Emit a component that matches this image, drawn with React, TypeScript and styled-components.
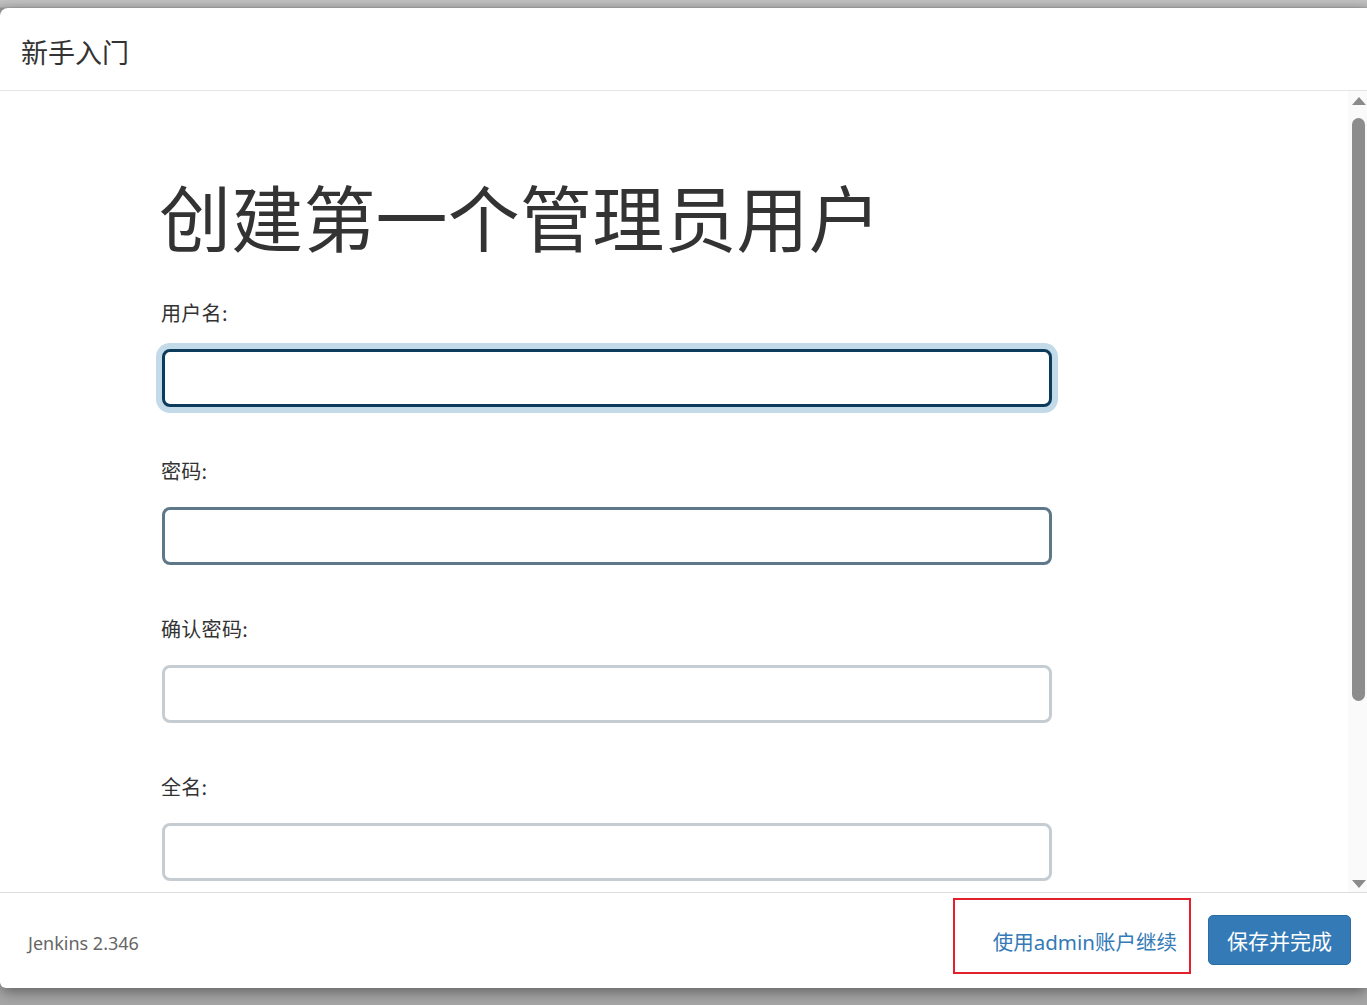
import styled, { createGlobalStyle } from 'styled-components'

const GlobalStyle = createGlobalStyle`
  html, body {
    margin: 0;
    padding: 0;
    background: #b4b4b4;
    font-family: 'Noto Sans', 'Noto Sans CJK SC', sans-serif;
  }
  * { box-sizing: border-box; }
`

const fields = [
  { label: '用户名:', state: 'focus' },
  { label: '密码:', state: 'hover' },
  { label: '确认密码:', state: 'idle' },
  { label: '全名:', state: 'idle' },
] as const

type FieldState = 'focus' | 'hover' | 'idle'

export default function App() {
  return (
    <>
      <GlobalStyle />
      <Page>
        <Modal>
          <Header>
            <Title>新手入门</Title>
          </Header>
          <BodyRow>
            <Content>
              <Heading>创建第一个管理员用户</Heading>
              {fields.map((f) => (
                <Field key={f.label}>
                  <Label>{f.label}</Label>
                  <Input $state={f.state} />
                </Field>
              ))}
            </Content>
            <ScrollBar>
              <Arrow $dir="up" />
              <Track>
                <Thumb />
              </Track>
              <Arrow $dir="down" />
            </ScrollBar>
          </BodyRow>
          <Footer>
            <Version>Jenkins 2.346</Version>
            <Actions>
              <Marked>
                <LinkText>使用admin账户继续</LinkText>
              </Marked>
              <PrimaryButton>保存并完成</PrimaryButton>
            </Actions>
          </Footer>
        </Modal>
      </Page>
    </>
  )
}

const Page = styled.div`
  height: 1005px;
  padding-top: 8px;
  overflow: hidden;
  background: linear-gradient(#c2c2c2 0, #b8b8b8 7px, #9a9a9a 8px, #b0b0b0 980px, #a5a5a5 1005px);
`

const Modal = styled.div`
  width: 1367px;
  height: 980px;
  background: #fff;
  border-top-left-radius: 8px;
  border-bottom-left-radius: 6px;
  display: flex;
  flex-direction: column;
  box-shadow: 0 4px 14px rgba(0, 0, 0, 0.45);
`

const Header = styled.div`
  height: 83px;
  flex: none;
  display: flex;
  align-items: center;
  padding: 4px 0 0 21px;
  border-bottom: 1px solid #e5e5e5;
`

const Title = styled.h4`
  margin: 0;
  font-size: 27px;
  font-weight: 400;
  color: #333;
  font-family: 'Noto Sans CJK SC', sans-serif;
`

const BodyRow = styled.div`
  flex: 1;
  display: flex;
  min-height: 0;
  overflow: hidden;
`

const Content = styled.div`
  flex: 1;
  padding: 84px 0 0 161px;
  font-family: 'Noto Sans CJK SC', sans-serif;
  color: #333;
`

const Heading = styled.h1`
  margin: 0 0 43px -2px;
  font-size: 72px;
  line-height: 80px;
  font-weight: 400;
  color: #333;
  letter-spacing: 0.2px;
`

const Field = styled.div`
  display: flex;
  flex-direction: column;
  margin-bottom: 49px;
`

const Label = styled.label`
  font-size: 20px;
  line-height: 30px;
  height: 30px;
  margin-bottom: 21px;
  color: #333;
  letter-spacing: 0.3px;
`

const borderColors: Record<FieldState, string> = {
  focus: '#0c3b5c',
  hover: '#5e7889',
  idle: '#c6cdd2',
}

const Input = styled.div<{ $state: FieldState }>`
  width: 890px;
  height: 58px;
  margin-left: 1px;
  border: 3px solid ${(p) => borderColors[p.$state]};
  border-radius: 8px;
  background: #fff;
  box-shadow: ${(p) => (p.$state === 'focus' ? '0 0 0 6px #c3dbe9' : 'none')};
`

const ScrollBar = styled.div`
  width: 19px;
  flex: none;
  background: #fafafa;
  display: flex;
  flex-direction: column;
  align-items: center;
  padding: 6px 0 4px;
`

const Arrow = styled.div<{ $dir: 'up' | 'down' }>`
  width: 0;
  height: 0;
  border-left: 7px solid transparent;
  border-right: 7px solid transparent;
  ${(p) =>
    p.$dir === 'up'
      ? 'border-bottom: 8px solid #8a8a8a; margin-bottom: 13px; margin-left: 2px;'
      : 'border-top: 8px solid #8a8a8a; margin-top: auto; margin-left: 2px;'}
`

const Track = styled.div`
  width: 100%;
  display: flex;
  justify-content: center;
  padding-left: 2px;
`

const Thumb = styled.div`
  width: 13px;
  height: 583px;
  border-radius: 7px;
  background: #8c8c8c;
`

const Footer = styled.div`
  height: 96px;
  flex: none;
  border-top: 1px solid #dedede;
  display: flex;
  align-items: center;
  justify-content: space-between;
  padding: 0 16px 0 28px;
`

const Version = styled.span`
  font-family: 'Noto Sans', sans-serif;
  font-size: 18px;
  line-height: 26px;
  color: #666;
  margin-top: 4px;
`

const Actions = styled.div`
  align-self: flex-start;
  display: flex;
  align-items: flex-start;
  gap: 17px;
  padding-top: 5px;
`

const Marked = styled.div`
  width: 238px;
  height: 76px;
  border: 2px solid #e3212b;
  display: flex;
  align-items: center;
  justify-content: flex-end;
  padding: 11px 12px 0 0;
`

const LinkText = styled.a`
  font-family: 'Noto Sans', 'Noto Sans CJK SC', sans-serif;
  font-size: 20.5px;
  line-height: 28px;
  color: #337ab7;
  letter-spacing: 0;
  white-space: nowrap;
`

const PrimaryButton = styled.button`
  width: 143px;
  height: 50px;
  margin-top: 17px;
  border: 1px solid #2e6da4;
  border-radius: 5px;
  background: #337ab7;
  color: #fff;
  font-family: 'Noto Sans CJK SC', sans-serif;
  font-size: 21px;
  padding: 0;
`
